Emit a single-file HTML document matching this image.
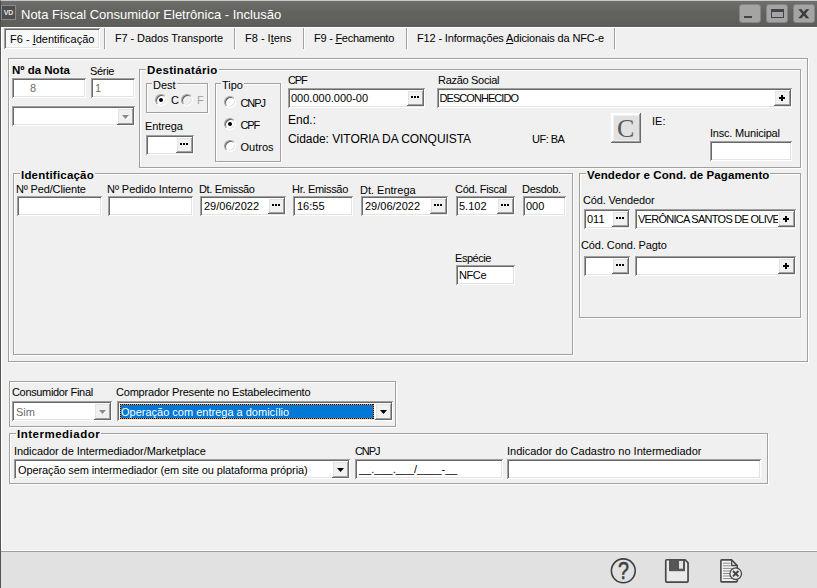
<!DOCTYPE html>
<html lang="pt-BR">
<head>
<meta charset="utf-8">
<title>Nota Fiscal Consumidor Eletrônica - Inclusão</title>
<style>
*{box-sizing:border-box;margin:0;padding:0}
html,body{width:817px;height:588px;overflow:hidden;background:#f0f0f0}
body{position:relative;font-family:"Liberation Sans",sans-serif;font-size:11px;color:#000;line-height:13px}
.a{position:absolute;white-space:nowrap}
.b{font-weight:bold;font-size:11.5px}
#tb{left:0;top:0;width:817px;height:27px;background:linear-gradient(#6f706c,#63645f 40%,#5d5e59);border-top:1px solid #c9c9c9;border-left:1px solid #4a4a4a}
#tb .ttl{left:20px;top:6px;font-size:13px;color:#fff;line-height:16px}
.wb{top:3px;width:22px;height:19px;background:#a4a4a4;border:1px solid #858585;border-radius:3px}
#wl{left:0;top:27px;width:817px;height:1px;background:#fff}
#lb{left:0;top:27px;width:2px;height:561px;background:#fff;border-left:1px solid #555}
.in{background:#fff;height:20px;box-shadow:inset 1px 1px #a0a0a0,inset -1px -1px #fff,inset 2px 2px #696969,inset -2px -2px #e3e3e3}
.in .t{position:absolute;white-space:nowrap}
.bt{position:absolute;background:#f0f0f0;box-shadow:inset -1px -1px #696969,inset 1px 1px #fff,inset -2px -2px #a0a0a0,inset 2px 2px #e3e3e3}
.bt.d{box-shadow:inset -1px -1px #a0a0a0,inset 1px 1px #fff,inset -2px -2px #d0d0d0,inset 2px 2px #e8e8e8}
.bt i{position:absolute;background:#000}
.bt i.d1{left:4px;top:6px;width:2px;height:2px}
.bt i.d2{left:7px;top:6px;width:2px;height:2px}
.bt i.d3{left:10px;top:6px;width:2px;height:2px}
.bt i.ph{left:5px;top:7px;width:6px;height:2px}
.bt i.pv{left:7px;top:5px;width:2px;height:6px}
.fr i{position:absolute;background:repeating-linear-gradient(90deg,#000 0 1px,#ff8728 1px 2px)}
.fr i.v{background:repeating-linear-gradient(180deg,#000 0 1px,#ff8728 1px 2px)}
.gb{border:1px solid #a0a0a0;box-shadow:1px 1px 0 #fff, inset 1px 1px 0 #fff}
.cap{background:#f0f0f0;padding:0 1px}
.rd{width:12px;height:12px;border-radius:50%;background:#fff;border:1px solid;border-color:#a0a0a0 #fff #fff #a0a0a0;box-shadow:inset 1px 1px 0 #606060,inset -1px -1px 0 #e3e3e3}
.rd.ds{background:#f0f0f0}
.rd.on:after{content:"";position:absolute;left:3px;top:3px;width:4px;height:4px;border-radius:50%;background:#000}
.tab{top:28px;height:21px;width:1px;border-right:1px solid #a0a0a0;box-shadow:1px 0 0 #fff}
</style>
</head>
<body>
<div class="a" id="tb">
  <div class="a" style="left:0px;top:4px;width:15px;height:15px;background:#4e4e4e;border:1px solid #8a8a8a;color:#e8e8e8;font-size:7px;font-weight:bold;line-height:13px;text-align:center">VD</div>
  <div class="a ttl">Nota Fiscal Consumidor Eletrônica - Inclusão</div>
  <div class="a wb" style="left:738px"><i class="a" style="left:4px;top:10.5px;width:8px;height:2.5px;background:#444"></i></div>
  <div class="a wb" style="left:765px"><i class="a" style="left:4px;top:4px;width:13px;height:9px;border:1px solid #444;border-top-width:3px"></i></div>
  <div class="a wb" style="left:792px"><svg class="a" style="left:4px;top:4px" width="12" height="10" viewBox="0 0 12 10"><path d="M0.3 0.3H3.6L5.8 3L8 0.3H11.3L7.4 4.7L11.3 9.2H8L5.8 6.4L3.6 9.2H0.3L4.2 4.7Z" fill="#3a3a3a"/></svg></div>
</div>
<div class="a" id="wl"></div>
<div class="a" id="lb"></div>
<div class="a" style="left:4px;top:28px;width:96px;height:21px;background:repeating-conic-gradient(#fff 0% 25%,#f0f0f0 0% 50%) 0 0/2px 2px;box-shadow:inset 1px 1px #a0a0a0,inset -1px -1px #fff,inset 2px 2px #696969,inset -2px -2px #e3e3e3"></div>
<div class="a " style="left:10px;top:33px">F6 - <u>I</u>dentificação</div>
<div class="a tab" style="left:104px"></div>
<div class="a " style="left:115px;top:32px;letter-spacing:-0.1px">F7 - Dados Transporte</div>
<div class="a tab" style="left:234px"></div>
<div class="a " style="left:245px;top:32px">F8 - I<u>t</u>ens</div>
<div class="a tab" style="left:303px"></div>
<div class="a " style="left:314px;top:32px;letter-spacing:-0.25px">F9 - <u>F</u>echamento</div>
<div class="a tab" style="left:406px"></div>
<div class="a " style="left:417px;top:32px;letter-spacing:-0.15px">F12 - Informações <u>A</u>dicionais da NFC-e</div>
<div class="a tab" style="left:614px"></div>
<div class="a gb" style="left:8px;top:58px;width:800px;height:304px"></div>
<div class="a b" style="left:12px;top:64px">Nº da Nota</div>
<div class="a " style="left:90px;top:65px;letter-spacing:-0.3px">Série</div>
<div class="a in" style="left:12px;top:78px;width:74px"><span class="t" style="left:18px;top:4px;color:#6d6d6d">8</span></div>
<div class="a in" style="left:91px;top:78px;width:44px"><span class="t" style="left:4px;top:4px;color:#6d6d6d">1</span></div>
<div class="a in" style="left:12px;top:106px;width:123px"><div class="bt" style="left:105px;top:2px;width:17px;height:17px"><svg class="a" style="left:5px;top:7px" width="8" height="5"><path d="M1 1h7l-3.5 4z" fill="#fff"/><path d="M0 0h7l-3.5 4z" fill="#8a8a8a"/></svg></div></div>
<div class="a gb" style="left:139px;top:69px;width:662px;height:99px"></div>
<div class="a b cap" style="left:146px;top:64px;letter-spacing:0.35px">Destinatário</div>
<div class="a gb" style="left:146px;top:83px;width:62px;height:30px"></div>
<div class="a cap" style="left:152px;top:79px">Dest</div>
<div class="a rd on" style="left:155px;top:94px"></div>
<div class="a " style="left:171px;top:94px">C</div>
<div class="a rd ds" style="left:181px;top:94px"></div>
<div class="a " style="left:197px;top:94px;color:#a0a0a0">F</div>
<div class="a " style="left:145px;top:120px;letter-spacing:-0.1px">Entrega</div>
<div class="a in" style="left:146px;top:135px;width:48px"><div class="bt" style="left:30px;top:2px;width:17px;height:16px"><i class="d1"></i><i class="d2"></i><i class="d3"></i></div></div>
<div class="a gb" style="left:215px;top:83px;width:66px;height:79px"></div>
<div class="a cap" style="left:221px;top:79px">Tipo</div>
<div class="a rd" style="left:224px;top:96px"></div>
<div class="a " style="left:240.5px;top:97px;letter-spacing:-1.1px">CNPJ</div>
<div class="a rd on" style="left:224px;top:118px"></div>
<div class="a " style="left:240.5px;top:119px;letter-spacing:-1.1px">CPF</div>
<div class="a rd" style="left:224px;top:140px"></div>
<div class="a " style="left:240.5px;top:141px">Outros</div>
<div class="a " style="left:288px;top:74px;letter-spacing:-1.1px">CPF</div>
<div class="a in" style="left:288px;top:88px;width:137px"><span class="t" style="left:3px;top:4px">000.000.000-00</span><div class="bt" style="left:119px;top:2px;width:17px;height:16px"><i class="d1"></i><i class="d2"></i><i class="d3"></i></div></div>
<div class="a " style="left:288px;top:114px;font-size:12px">End.:</div>
<div class="a " style="left:288px;top:133px;letter-spacing:-0.07px;font-size:12px">Cidade: VITORIA DA CONQUISTA</div>
<div class="a " style="left:438px;top:74px;letter-spacing:-0.3px">Razão Social</div>
<div class="a in" style="left:437px;top:88px;width:355px"><span class="t" style="left:2.5px;top:4px;letter-spacing:-0.94px">DESCONHECIDO</span><div class="bt" style="left:337px;top:2px;width:17px;height:16px"><i class="ph"></i><i class="pv"></i></div></div>
<div class="a " style="left:532px;top:133px;letter-spacing:-0.5px">UF: BA</div>
<div class="a bt" style="left:611px;top:113px;width:30px;height:30px;background:#f0f0f0;box-shadow:inset -1px -1px #696969,inset 1px 1px #fff,inset -2px -2px #a0a0a0,inset 2px 2px #fff"><div class="a" style="left:3px;top:3px;width:25px;height:24px;background:#e1e1e1"></div><span class="a" style="left:6px;top:1.5px;font-family:'Liberation Serif',serif;font-size:26px;line-height:28px;color:#585858">C</span></div>
<div class="a " style="left:652px;top:115px">IE:</div>
<div class="a " style="left:710px;top:127px;letter-spacing:-0.2px">Insc. Municipal</div>
<div class="a in" style="left:710px;top:141px;width:82px"></div>
<div class="a gb" style="left:13px;top:173px;width:560px;height:182px"></div>
<div class="a b cap" style="left:20px;top:169px;letter-spacing:0.2px">Identificação</div>
<div class="a " style="left:16px;top:183px;letter-spacing:-0.15px">Nº Ped/Cliente</div>
<div class="a in" style="left:17px;top:196px;width:85px"></div>
<div class="a " style="left:107px;top:183px;letter-spacing:-0.05px">Nº Pedido Interno</div>
<div class="a in" style="left:108px;top:196px;width:85px"></div>
<div class="a " style="left:199px;top:183px;letter-spacing:-0.33px">Dt. Emissão</div>
<div class="a in" style="left:200px;top:196px;width:86px"><span class="t" style="left:4px;top:4px">29/06/2022</span><div class="bt" style="left:68px;top:2px;width:17px;height:16px"><i class="d1"></i><i class="d2"></i><i class="d3"></i></div></div>
<div class="a " style="left:292px;top:183px;letter-spacing:-0.3px">Hr. Emissão</div>
<div class="a in" style="left:293px;top:196px;width:60px"><span class="t" style="left:4px;top:4px">16:55</span></div>
<div class="a " style="left:360px;top:184px">Dt. Entrega</div>
<div class="a in" style="left:361px;top:196px;width:87px"><span class="t" style="left:4px;top:4px">29/06/2022</span><div class="bt" style="left:69px;top:2px;width:17px;height:16px"><i class="d1"></i><i class="d2"></i><i class="d3"></i></div></div>
<div class="a " style="left:455px;top:183px;letter-spacing:-0.3px">Cód. Fiscal</div>
<div class="a in" style="left:456px;top:196px;width:59px"><span class="t" style="left:3px;top:4px">5.102</span><div class="bt" style="left:41px;top:2px;width:17px;height:16px"><i class="d1"></i><i class="d2"></i><i class="d3"></i></div></div>
<div class="a " style="left:522px;top:183px;letter-spacing:-0.3px">Desdob.</div>
<div class="a in" style="left:523px;top:196px;width:43px"><span class="t" style="left:3px;top:4px">000</span></div>
<div class="a " style="left:455px;top:252px;letter-spacing:-0.45px">Espécie</div>
<div class="a in" style="left:456px;top:265px;width:59px"><span class="t" style="left:3px;top:4px;letter-spacing:-0.4px">NFCe</span></div>
<div class="a gb" style="left:579px;top:173px;width:222px;height:145px"></div>
<div class="a b cap" style="left:586px;top:169px;letter-spacing:0.1px">Vendedor e Cond. de Pagamento</div>
<div class="a " style="left:583px;top:194px;letter-spacing:-0.15px">Cód. Vendedor</div>
<div class="a in" style="left:584px;top:209px;width:46px"><span class="t" style="left:3px;top:4px">011</span><div class="bt" style="left:28px;top:2px;width:17px;height:16px"><i class="d1"></i><i class="d2"></i><i class="d3"></i></div></div>
<div class="a in" style="left:635px;top:209px;width:161px"><span class="t" style="left:3px;top:4px;letter-spacing:-0.73px;width:140px;overflow:hidden">VERÔNICA SANTOS DE OLIVEIRA</span><div class="bt" style="left:143px;top:2px;width:17px;height:16px"><i class="ph"></i><i class="pv"></i></div></div>
<div class="a " style="left:581px;top:239px;letter-spacing:-0.1px">Cód. Cond. Pagto</div>
<div class="a in" style="left:584px;top:256px;width:46px"><div class="bt" style="left:28px;top:2px;width:17px;height:16px"><i class="d1"></i><i class="d2"></i><i class="d3"></i></div></div>
<div class="a in" style="left:635px;top:256px;width:161px"><div class="bt" style="left:143px;top:2px;width:17px;height:16px"><i class="ph"></i><i class="pv"></i></div></div>
<div class="a gb" style="left:9px;top:381px;width:387px;height:46px"></div>
<div class="a " style="left:12px;top:386px;letter-spacing:-0.34px">Consumidor Final</div>
<div class="a in" style="left:12px;top:401px;width:100px"><span class="t" style="left:4px;top:5px;color:#6d6d6d">Sim</span><div class="bt" style="left:82px;top:2px;width:17px;height:17px"><svg class="a" style="left:5px;top:7px" width="8" height="5"><path d="M1 1h7l-3.5 4z" fill="#fff"/><path d="M0 0h7l-3.5 4z" fill="#8a8a8a"/></svg></div></div>
<div class="a " style="left:116px;top:386px;letter-spacing:-0.2px">Comprador Presente no Estabelecimento</div>
<div class="a in" style="left:117px;top:401px;width:276px"><div class="a fr" style="left:3px;top:3px;width:254px;height:15px;background:#0078d7"><i style="left:0;top:0;width:100%;height:1px"></i><i style="left:0;bottom:0;width:100%;height:1px"></i><i class="v" style="left:0;top:0;width:1px;height:100%"></i><i class="v" style="right:0;top:0;width:1px;height:100%"></i></div><span class="t" style="left:4px;top:5px;color:#fff">Operação com entrega a domicílio</span><div class="bt" style="left:258px;top:2px;width:17px;height:17px"><svg class="a" style="left:5px;top:7px" width="8" height="5"><path d="M0 0h7l-3.5 4z" fill="#000"/></svg></div></div>
<div class="a gb" style="left:9px;top:433px;width:759px;height:51px"></div>
<div class="a b cap" style="left:16px;top:428px;letter-spacing:0.5px">Intermediador</div>
<div class="a " style="left:14px;top:445px;letter-spacing:-0.07px">Indicador de Intermediador/Marketplace</div>
<div class="a in" style="left:14px;top:459px;width:336px"><span class="t" style="left:4px;top:5px;letter-spacing:-0.11px">Operação sem intermediador (em site ou plataforma própria)</span><div class="bt" style="left:318px;top:2px;width:17px;height:17px"><svg class="a" style="left:5px;top:7px" width="8" height="5"><path d="M0 0h7l-3.5 4z" fill="#000"/></svg></div></div>
<div class="a " style="left:355px;top:445px;letter-spacing:-1.1px">CNPJ</div>
<div class="a in" style="left:355px;top:459px;width:148px"><span class="t" style="left:4px;top:4px">__.___.___/____-__</span></div>
<div class="a " style="left:507px;top:445px">Indicador do Cadastro no Intermediador</div>
<div class="a in" style="left:507px;top:459px;width:254px"></div>
<div class="a" style="left:1px;top:550px;width:816px;height:38px;background:#e1e1e1;border-top:1px solid #fafafa;box-shadow:inset 0 1px #a0a0a0"></div>
<svg class="a" style="left:606px;top:554px" width="146" height="34" viewBox="606 554 146 34" fill="none" stroke="#444" stroke-width="1.5">
  <circle cx="623.3" cy="570.8" r="11.9" stroke-width="1.6" stroke="#3e3e3e"/>
  <text transform="translate(623.4 579.4) scale(0.84 1)" x="0" y="0" text-anchor="middle" font-family="Liberation Sans, sans-serif" font-size="23.5" fill="#404040" stroke="#404040" stroke-width="0.5">?</text>
  <path d="M666.8 559.75H685L688.05 562.8V581Q688.05 582.05 687 582.05H666.8Q665.75 582.05 665.75 581V560.8Q665.75 559.75 666.8 559.75Z" fill="#eaeaea" stroke="#484848" stroke-width="1.7"/>
  <path d="M669 559.6h16v11.6h-16z" fill="#565656" stroke="none"/>
  <path d="M679 561h4v7.7h-4z" fill="#e4e4e4" stroke="none"/>
  <path d="M721.7 559.9H731.5L737.2 565.6V581Q737.2 581.9 736.3 581.9H721.7Q720.9 581.9 720.9 581V560.8Q720.9 559.9 721.7 559.9Z" fill="#f4f4f4" stroke="#484848" stroke-width="1.6"/>
  <path d="M731.6 560v5.5h5.5" stroke="#484848" stroke-width="1.3"/>
  <path d="M723 563.2h7.5M723 565.8h7.5M723 568.4h10M723 571h7.5M723 573.5h7.5M723 576h7.5M723 578.6h9" stroke="#8c8c8c" stroke-width="1"/>
  <circle cx="735.7" cy="573.7" r="5.8" fill="#e8e8e8" stroke="#484848" stroke-width="1.3"/>
  <path d="M733 571l5.4 5.4M738.4 571l-5.4 5.4" stroke="#444" stroke-width="2"/>
</svg>
</body>
</html>
